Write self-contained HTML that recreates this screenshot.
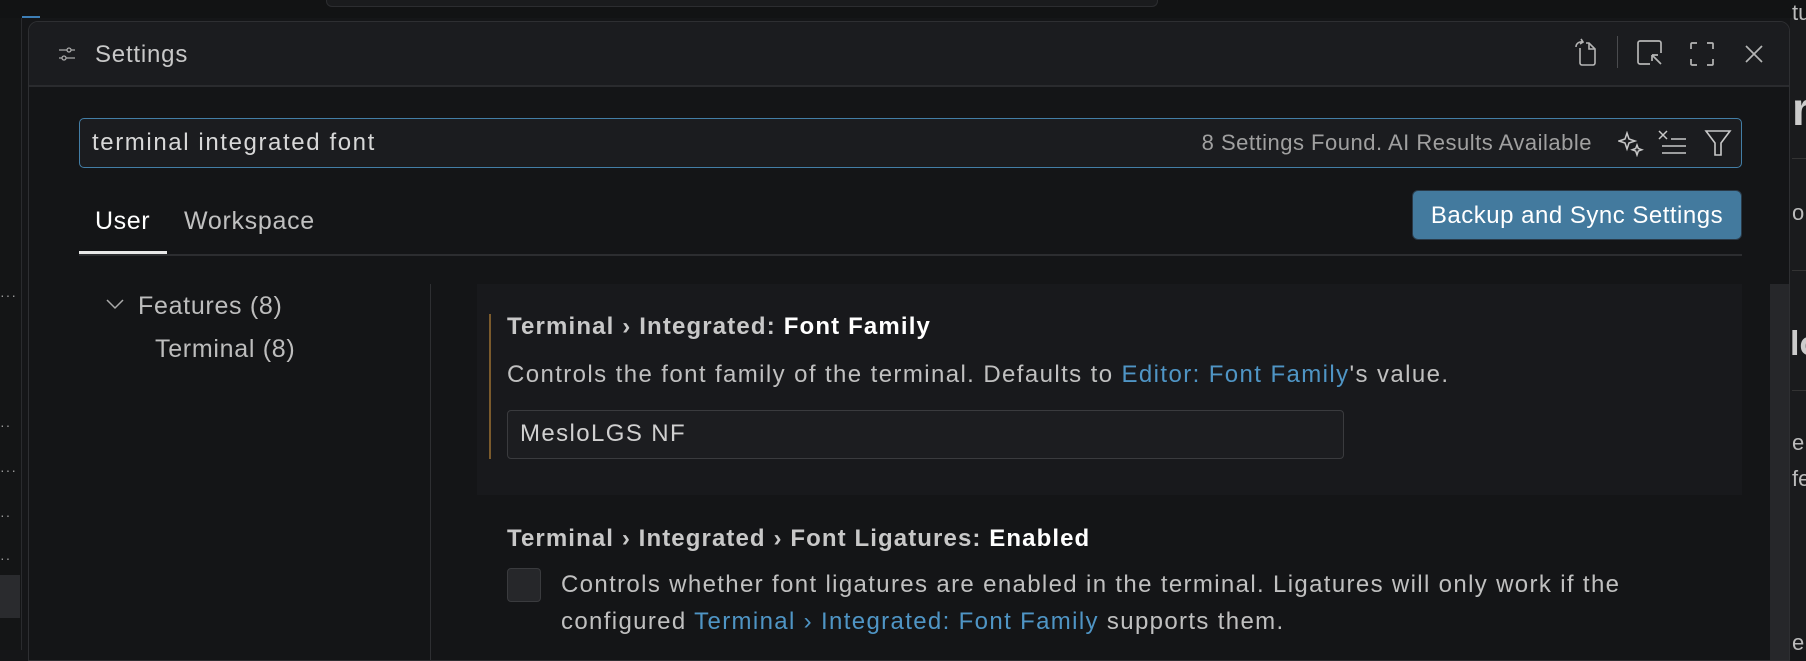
<!DOCTYPE html>
<html><head><meta charset="utf-8"><style>
*{margin:0;padding:0;box-sizing:border-box}
body{width:1806px;height:650px;background:#151618;overflow:hidden;position:relative;font-family:"Liberation Sans",sans-serif;color:#c4c4c4}
.a{position:absolute;white-space:nowrap}
.dots{position:absolute;left:0;color:#9a9a9a;font-size:14px;letter-spacing:1px;line-height:10px}
.t{font-size:24px;letter-spacing:1.4px}
</style></head><body>
<div class="a" style="left:0;top:0;width:1806px;height:18px;background:#121314"></div>
<div class="a" style="left:326px;top:0;width:832px;height:7px;background:#1a1b1d;border:1px solid #2c2d30;border-top:none;border-radius:0 0 6px 6px"></div>
<div class="a" style="left:0;top:18px;width:22px;height:632px;background:#141516"></div>
<div class="a" style="left:21px;top:18px;width:1px;height:632px;background:#2a2b2e"></div>
<div class="a" style="left:22px;top:16px;width:18px;height:2px;background:#3d7eb5"></div>
<div class="dots" style="top:290px">···</div>
<div class="dots" style="top:420px">··</div>
<div class="dots" style="top:465px">···</div>
<div class="dots" style="top:510px">··</div>
<div class="dots" style="top:553px">··</div>
<div class="a" style="left:0;top:575px;width:20px;height:43px;background:#2a2b2e"></div>
<div class="a" style="left:1790px;top:18px;width:16px;height:632px;background:#1a1b1d"></div>
<div class="a" style="left:1792px;top:0;font-size:22px;color:#bbb">tu</div>
<div class="a" style="left:1792px;top:82px;font-size:46px;font-weight:bold;color:#ccc">r</div>
<div class="a" style="left:1792px;top:158px;width:14px;height:1px;background:#333"></div>
<div class="a" style="left:1792px;top:200px;font-size:22px;color:#bbb">o</div>
<div class="a" style="left:1792px;top:270px;width:14px;height:1px;background:#333"></div>
<div class="a" style="left:1790px;top:325px;font-size:34px;font-weight:bold;color:#ccc">lo</div>
<div class="a" style="left:1792px;top:390px;width:14px;height:1px;background:#333"></div>
<div class="a" style="left:1792px;top:430px;font-size:22px;color:#bbb">e,</div>
<div class="a" style="left:1792px;top:466px;font-size:22px;color:#bbb">fe</div>
<div class="a" style="left:1792px;top:630px;font-size:22px;color:#bbb">e</div>
<div class="a" style="left:28px;top:21px;width:1762px;height:640px;background:#141517;border:1px solid #2e2f32;border-radius:10px 10px 0 0;overflow:hidden">
  <div class="a" style="left:0;top:0;width:1762px;height:65px;background:#1b1c1f;border-bottom:2px solid #2a2b2e"></div>
  <svg class="a" style="left:29px;top:24px" width="18" height="16" viewBox="0 0 18 16" fill="none" stroke="#aaa" stroke-width="1.3"><line x1="1" y1="4" x2="17" y2="4"/><circle cx="11" cy="4" r="2" fill="#1b1c1f"/><line x1="1" y1="12" x2="17" y2="12"/><circle cx="6" cy="12" r="2" fill="#1b1c1f"/></svg>
  <div class="a" style="left:66px;top:19px;font-size:24px;letter-spacing:0.8px;color:#c8c8c8">Settings</div>
  <svg class="a" style="left:1544px;top:16px" width="26" height="30" viewBox="0 0 26 30" fill="none" stroke="#b5b5b5" stroke-width="1.6"><path d="M7 10v15a2 2 0 0 0 2 2h11a2 2 0 0 0 2-2V11l-6-6h-3"/><path d="M16 5v6h6"/><path d="M3 9a5 5 0 0 1 6-5l1 0M8 1l2 3-3 2"/></svg>
  <div class="a" style="left:1588px;top:14px;width:1px;height:32px;background:#4a4b4e"></div>
  <svg class="a" style="left:1607px;top:17px" width="30" height="28" viewBox="0 0 30 28" fill="none" stroke="#b5b5b5" stroke-width="1.7"><path d="M14 25H4a2 2 0 0 1-2-2V4a2 2 0 0 1 2-2h19a2 2 0 0 1 2 2v10"/><path d="M16 16l9 9M16 16h6M16 16v6"/></svg>
  <svg class="a" style="left:1660px;top:19px" width="26" height="26" viewBox="0 0 26 26" fill="none" stroke="#b5b5b5" stroke-width="1.7"><path d="M2 8V3a1 1 0 0 1 1-1h5M18 2h5a1 1 0 0 1 1 1v5M24 18v5a1 1 0 0 1-1 1h-5M8 24H3a1 1 0 0 1-1-1v-5"/></svg>
  <svg class="a" style="left:1715px;top:22px" width="20" height="20" viewBox="0 0 20 20" stroke="#b5b5b5" stroke-width="1.7"><path d="M2 2l16 16M18 2L2 18"/></svg>
  <div class="a" style="left:50px;top:96px;width:1663px;height:50px;background:#1b1c1f;border:1.5px solid #437ea6;border-radius:5px"></div>
  <div class="a" style="left:63px;top:107px;font-size:24px;letter-spacing:1.6px;color:#d8d8d8">terminal integrated font</div>
  <div class="a" style="right:197px;top:108px;font-size:22px;letter-spacing:0.5px;color:#a0a0a0">8 Settings Found. AI Results Available</div>
  <svg class="a" style="left:1589px;top:109px" width="26" height="26" viewBox="0 0 26 26" fill="none" stroke="#c8c8c8" stroke-width="1.5"><path d="M9 2l2 6 6 2-6 2-2 6-2-6-6-2 6-2z"/><path d="M19 14l1.3 3.5 3.5 1.3-3.5 1.3L19 24l-1.3-3.9-3.5-1.3 3.5-1.3z"/></svg>
  <svg class="a" style="left:1629px;top:108px" width="30" height="26" viewBox="0 0 30 26" fill="none" stroke="#c8c8c8" stroke-width="1.5"><path d="M1 1l8 8M9 1l-8 8M13 9h15M4 16h24M4 23h24"/></svg>
  <svg class="a" style="left:1675px;top:106px" width="28" height="30" viewBox="0 0 28 30" fill="none" stroke="#c8c8c8" stroke-width="1.6"><path d="M2 3h24l-9 12v12h-6V15z"/></svg>
  <div class="a" style="left:66px;top:185px;font-size:25px;letter-spacing:0.6px;color:#fff">User</div>
  <div class="a" style="left:155px;top:185px;font-size:25px;letter-spacing:0.7px;color:#c0c0c0">Workspace</div>
  <div class="a" style="left:50px;top:232px;width:1663px;height:2px;background:#2c2d30"></div>
  <div class="a" style="left:50px;top:229px;width:88px;height:3px;background:#e8e8e8"></div>
  <div class="a" style="left:1383px;top:168px;width:330px;height:50px;background:#437a9e;border:1.5px solid #2a3a48;border-radius:6px;color:#fff;font-size:24px;letter-spacing:0.5px;text-align:center;line-height:50px">Backup and Sync Settings</div>
  <svg class="a" style="left:76px;top:276px" width="20" height="14" viewBox="0 0 20 14" fill="none" stroke="#aaa" stroke-width="1.5"><path d="M2 2l8 8 8-8"/></svg>
  <div class="a" style="left:109px;top:270px;font-size:25px;letter-spacing:0.7px;color:#bdbdbd">Features (8)</div>
  <div class="a" style="left:126px;top:313px;font-size:25px;letter-spacing:0.7px;color:#bdbdbd">Terminal (8)</div>
  <div class="a" style="left:401px;top:262px;width:1px;height:380px;background:#2e2f32"></div>
  <div class="a" style="left:448px;top:262px;width:1265px;height:211px;background:#18191c"></div>
  <div class="a" style="left:460px;top:292px;width:2px;height:145px;background:#7a5a2c"></div>
  <div class="a t" style="left:478px;top:291px;color:#c8c8c8;font-weight:bold;letter-spacing:1.15px">Terminal › Integrated: <span style="color:#fff">Font Family</span></div>
  <div class="a t" style="left:478px;top:339px;color:#c0c0c0">Controls the font family of the terminal. Defaults to <span style="color:#4f95c5">Editor: Font Family</span>'s value.</div>
  <div class="a" style="left:478px;top:388px;width:837px;height:49px;background:#1c1d20;border:1.5px solid #3a3b3e;border-radius:4px"></div>
  <div class="a t" style="left:491px;top:398px;color:#d0d0d0">MesloLGS NF</div>
  <div class="a t" style="left:478px;top:503px;color:#c8c8c8;font-weight:bold;letter-spacing:1.1px">Terminal › Integrated › Font Ligatures: <span style="color:#fff">Enabled</span></div>
  <div class="a" style="left:478px;top:546px;width:34px;height:34px;background:#26272a;border:1.5px solid #3a3b3e;border-radius:4px"></div>
  <div class="a t" style="left:532px;top:544px;color:#c0c0c0;line-height:37px;letter-spacing:1.35px">Controls whether font ligatures are enabled in the terminal. Ligatures will only work if the<br>configured <span style="color:#4f95c5">Terminal › Integrated: Font Family</span> supports them.</div>
  <div class="a" style="left:1741px;top:262px;width:21px;height:380px;background:#26272a"></div>
</div>
</body></html>
